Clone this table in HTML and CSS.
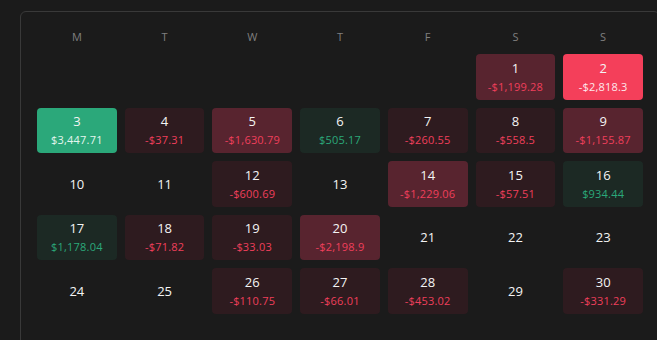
FILE: index.html
```html
<!DOCTYPE html>
<html>
<head>
<meta charset="utf-8">
<link rel="stylesheet" href="styles.css">
</head>
<body>
<div class="page">
  <div class="calendar">
    <div class="weekdays">
      <div>M</div><div>T</div><div>W</div><div>T</div><div>F</div><div>S</div><div>S</div>
    </div>
    <div class="grid">
      <div class="cell empty"></div>
      <div class="cell empty"></div>
      <div class="cell empty"></div>
      <div class="cell empty"></div>
      <div class="cell empty"></div>
      <div class="cell loss-2"><span class="day">1</span><span class="amt">-$1,199.28</span></div>
      <div class="cell loss-3"><span class="day">2</span><span class="amt">-$2,818.3</span></div>

      <div class="cell gain-3"><span class="day">3</span><span class="amt">$3,447.71</span></div>
      <div class="cell loss-1"><span class="day">4</span><span class="amt">-$37.31</span></div>
      <div class="cell loss-2"><span class="day">5</span><span class="amt">-$1,630.79</span></div>
      <div class="cell gain-1"><span class="day">6</span><span class="amt">$505.17</span></div>
      <div class="cell loss-1"><span class="day">7</span><span class="amt">-$260.55</span></div>
      <div class="cell loss-1"><span class="day">8</span><span class="amt">-$558.5</span></div>
      <div class="cell loss-2"><span class="day">9</span><span class="amt">-$1,155.87</span></div>

      <div class="cell"><span class="day">10</span></div>
      <div class="cell"><span class="day">11</span></div>
      <div class="cell loss-1"><span class="day">12</span><span class="amt">-$600.69</span></div>
      <div class="cell"><span class="day">13</span></div>
      <div class="cell loss-2"><span class="day">14</span><span class="amt">-$1,229.06</span></div>
      <div class="cell loss-1"><span class="day">15</span><span class="amt">-$57.51</span></div>
      <div class="cell gain-1"><span class="day">16</span><span class="amt">$934.44</span></div>

      <div class="cell gain-1"><span class="day">17</span><span class="amt">$1,178.04</span></div>
      <div class="cell loss-1"><span class="day">18</span><span class="amt">-$71.82</span></div>
      <div class="cell loss-1"><span class="day">19</span><span class="amt">-$33.03</span></div>
      <div class="cell loss-2"><span class="day">20</span><span class="amt">-$2,198.9</span></div>
      <div class="cell"><span class="day">21</span></div>
      <div class="cell"><span class="day">22</span></div>
      <div class="cell"><span class="day">23</span></div>

      <div class="cell"><span class="day">24</span></div>
      <div class="cell"><span class="day">25</span></div>
      <div class="cell loss-1"><span class="day">26</span><span class="amt">-$110.75</span></div>
      <div class="cell loss-1"><span class="day">27</span><span class="amt">-$66.01</span></div>
      <div class="cell loss-1"><span class="day">28</span><span class="amt">-$453.02</span></div>
      <div class="cell"><span class="day">29</span></div>
      <div class="cell loss-1"><span class="day">30</span><span class="amt">-$331.29</span></div>

      <div class="cell"><span class="day">31</span></div>
    </div>
  </div>
</div>
</body>
</html>
```

FILE: styles.css
```css
html, body {
  margin: 0;
  padding: 0;
  background: #1b1b1b;
  overflow: hidden;
  height: 340px;
}

body {
  font-family: "Open Sans", "Noto Sans", sans-serif;
  color: #f2f2f2;
}

.page {
  padding: 11px 0 0 20px;
}

.calendar {
  width: 606px;
  padding: 16px 16px 16px 16px;
  border: 1px solid #393939;
  border-radius: 6px;
  background: #1b1b1b;
}

.weekdays {
  display: grid;
  grid-template-columns: repeat(7, 1fr);
  column-gap: 8px;
  height: 18px;
  line-height: 18px;
  margin-bottom: 8px;
  font-size: 11px;
  color: #7f7f7f;
  text-align: center;
}

.grid {
  display: grid;
  grid-template-columns: repeat(7, 1fr);
  grid-auto-rows: 45.5px;
  gap: 8px;
}

.cell {
  border-radius: 4px;
  display: flex;
  flex-direction: column;
  align-items: center;
  justify-content: center;
  gap: 3px;
}

.day {
  font-size: 13px;
  line-height: 16px;
  font-weight: 500;
  color: #f4f4f4;
}

.amt {
  font-size: 11px;
  line-height: 15px;
  letter-spacing: 0.2px;
  color: #ef3f5b;
}

.loss-1 { background: #2e1b1f; }
.loss-2 { background: #58242f; }
.loss-3 { background: #f43f5a; }
.loss-3 .amt { color: #fde8ec; }

.gain-1 { background: #1c2924; }
.gain-1 .amt { color: #2ba87a; }
.gain-3 { background: #2ba87a; }
.gain-3 .amt { color: #e4f6ee; }
```
